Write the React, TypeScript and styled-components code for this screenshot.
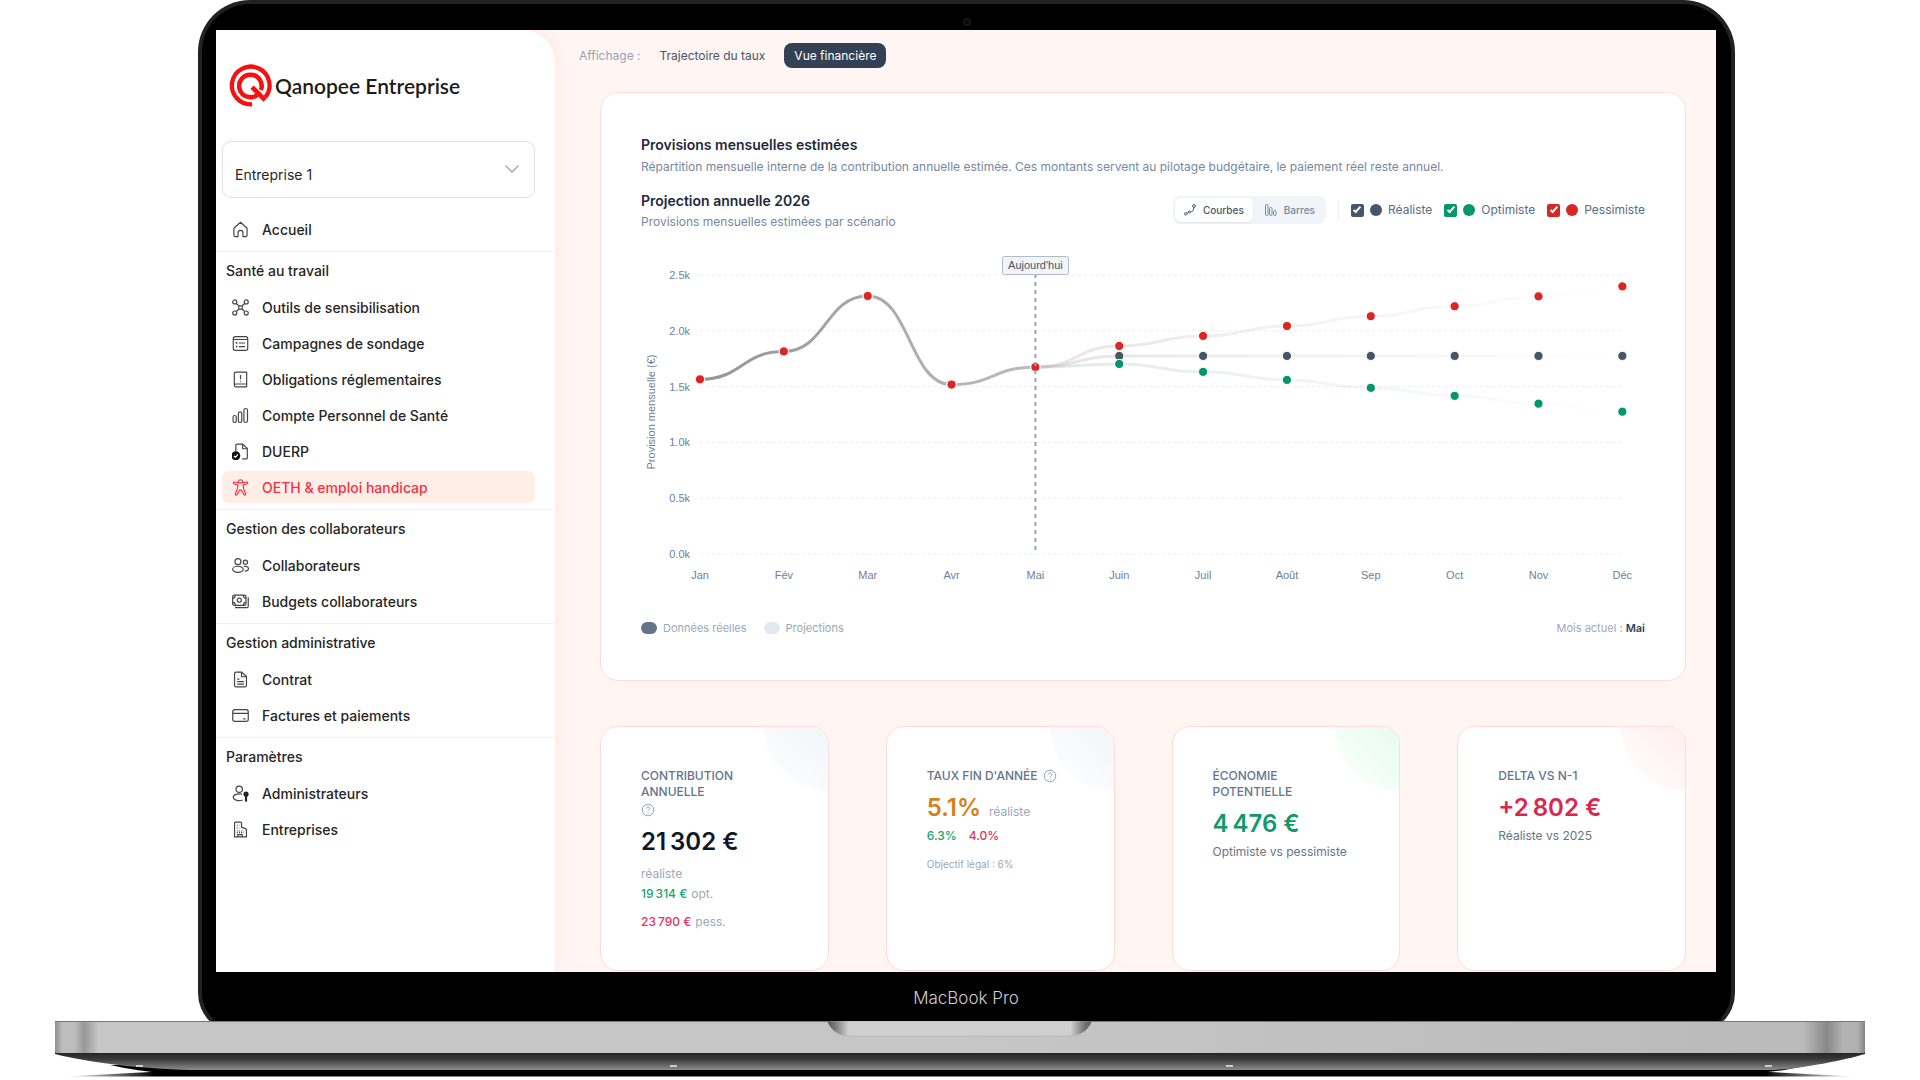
import React from "react";
import styled, { createGlobalStyle, css } from "styled-components";

const GlobalStyle = createGlobalStyle`
  *, *::before, *::after { box-sizing: border-box; }
  body { margin: 0; background: #fff; font-family: Inter, "Liberation Sans", sans-serif; color: #262626; }
  h1, h2, h3, p, ul { margin: 0; padding: 0; }
  ul { list-style: none; }
  button, select, input { font-family: inherit; }
`;

/* ---------- Laptop ---------- */

const Laptop = styled.div`
  overflow: hidden;
`;

const Lid = styled.div`
  position: relative;
  margin: 0 185px -12px 198px;
  padding: 26px 15px 12px 14px;
  background: #000;
  border: 4px solid #222;
  border-bottom-color: #111;
  border-radius: 52px 52px 40px 40px;
`;

const Camera = styled.i`
  position: absolute;
  top: 14px;
  left: 50%;
  width: 8px;
  height: 8px;
  margin-left: -4px;
  border-radius: 50%;
  border: 2px solid #15151c;
  background: #05050a;
`;

const Screen = styled.div`
  display: flex;
  align-items: stretch;
  background: #fff5f2;
  overflow: hidden;
`;

const Chin = styled.div`
  padding: 14px 0 7px;
  text-align: center;
  color: #cfcfcf;
  font-size: 17px;
  font-weight: 300;
  line-height: 24px;
`;

const BaseDrawing = styled.svg`
  position: relative;
  display: block;
  width: 100%;
  height: auto;
`;

/* ---------- Sidebar ---------- */

const Sidebar = styled.aside`
  flex: 0 0 339px;
  background: #fff;
  border-top-right-radius: 32px;
  box-shadow: 0 0 12px 3px #ffe9e6;
`;

const Brand = styled.div`
  display: flex;
  align-items: center;
  gap: 3px;
  padding: 34px 13px;
  color: #1c1c1c;
  font: 600 21px/42px Lato, "Open Sans", sans-serif;
`;

const CompanyField = styled.label`
  position: relative;
  display: block;
  margin: 0 20px 15px 6px;
  color: #a3a3b0;

  svg {
    position: absolute;
    right: 16px;
    top: 21px;
    pointer-events: none;
  }
`;

const CompanySelect = styled.select`
  appearance: none;
  width: 100%;
  height: 57px;
  padding: 9px 12px 0;
  border: 1px solid #e2e2e4;
  border-radius: 9px;
  background: #fff;
  color: #262626;
  font-size: 14px;
`;

const NavSection = styled.section`
  padding-bottom: 6px;
  border-bottom: 1px solid #ffecea;

  &:last-child { border-bottom: 0; }
`;

const SectionTitle = styled.h2`
  padding: 8px 10px 10px;
  font-size: 14px;
  line-height: 21px;
  font-weight: 500;
`;

const NavList = styled.ul`
  display: grid;
  gap: 4px;
  margin: 0 20px 0 6px;
`;

const NavLink = styled.a<{ $active?: boolean }>`
  display: flex;
  align-items: center;
  gap: 13px;
  height: 32px;
  padding: 0 10px;
  border-radius: 7px;
  color: inherit;
  font-size: 14px;
  font-weight: 500;
  text-decoration: none;

  svg { flex: none; color: #444; }

  ${(p) =>
    p.$active &&
    css`
      background: #ffeee8;
      color: #f6323e;
      svg { color: #f6323e; }
    `}
`;

/* ---------- Main ---------- */

const Main = styled.main`
  flex: 1;
  min-width: 0;
  padding: 13px 30px 1px 45px;
`;

const ViewBar = styled.div`
  display: flex;
  align-items: center;
  gap: 9px;
  margin: 0 0 24px -21px;
  color: #94a3b8;
  font-size: 12px;
`;

const ViewButton = styled.button<{ $active?: boolean }>`
  height: 25px;
  padding: 0 10px;
  border: 0;
  border-radius: 8px;
  background: ${(p) => (p.$active ? "#334155" : "transparent")};
  color: ${(p) => (p.$active ? "#fff" : "#475569")};
  font-size: 12px;
`;

const cardFrame = css`
  border: 1px solid #ffdcdb;
  border-radius: 18px;
  background: #fff;
`;

const ChartCard = styled.section`
  ${cardFrame}
  padding: 41px 40px 44px;
`;

const CardTitle = styled.h2`
  color: #1e293b;
  font-size: 14px;
  line-height: 22px;
  font-weight: 600;
`;

const Muted = styled.p`
  color: #7688a3;
  font-size: 12px;
  line-height: 20px;
`;

const CardIntro = styled.header`
  display: grid;
  gap: 1px;
`;

const ChartHead = styled.div`
  display: flex;
  align-items: center;
  justify-content: space-between;
  margin-top: 13px;
`;

const Controls = styled.div`
  display: flex;
  align-items: center;
  gap: 12px;
  padding-bottom: 2px;
`;

const Toggle = styled.div`
  display: flex;
  gap: 3px;
  padding: 2px;
  border-radius: 8px;
  background: #f1f5f9;
`;

const ToggleButton = styled.button<{ $active?: boolean }>`
  display: flex;
  align-items: center;
  gap: 7px;
  height: 24px;
  padding: 0 9px;
  border: 0;
  border-radius: 6px;
  background: ${(p) => (p.$active ? "#fff" : "transparent")};
  box-shadow: ${(p) => (p.$active ? "0 1px 2px #dde3ea" : "none")};
  color: ${(p) => (p.$active ? "#475569" : "#7688a3")};
  font-size: 10px;
  font-weight: 500;
`;

const Scenarios = styled.div`
  display: flex;
  gap: 12px;
  padding-left: 12px;
  border-left: 1px solid #e8edf3;
`;

const Scenario = styled.label<{ $color: string }>`
  display: flex;
  align-items: center;
  gap: 6px;
  color: #5b6b82;
  font-size: 12px;
  line-height: 18px;

  input {
    appearance: none;
    display: grid;
    place-items: center;
    width: 13px;
    height: 13px;
    margin: 0;
    border-radius: 2px;
    background: ${(p) => p.$color};
  }

  input:checked::before {
    content: "";
    width: 4px;
    height: 8px;
    margin-bottom: 2px;
    border: solid #fff;
    border-width: 0 2px 2px 0;
    transform: rotate(42deg);
  }

  i {
    width: 12px;
    height: 12px;
    border-radius: 50%;
    background: ${(p) => p.$color};
  }
`;

const Plot = styled.svg`
  display: block;
  width: 100%;
  height: auto;
  margin-top: 12px;

  text { font: 11px "Liberation Sans", Arial, sans-serif; fill: #6f809a; }
  .today { fill: #475569; }
`;

const PlotFoot = styled.div`
  display: flex;
  justify-content: space-between;
  color: #9aa8bb;
  font-size: 11px;
  line-height: 16px;

  strong { color: #334155; font-weight: 600; }
`;

const Keys = styled.div`
  display: flex;
  gap: 17px;
`;

const Key = styled.span<{ $color: string }>`
  display: flex;
  align-items: center;
  gap: 6px;

  &::before {
    content: "";
    width: 16px;
    height: 12px;
    border-radius: 6px;
    background: ${(p) => p.$color};
  }
`;

const KpiGrid = styled.div`
  display: grid;
  grid-template-columns: repeat(4, 1fr);
  gap: 57px;
  margin-top: 45px;
`;

const KpiCard = styled.article<{ $tint: string }>`
  ${cardFrame}
  position: relative;
  overflow: hidden;
  padding: 41px 40px 40px;
  font-size: 12px;
  line-height: 16px;

  &::before {
    content: "";
    position: absolute;
    top: -64px;
    right: -64px;
    width: 128px;
    height: 128px;
    border-radius: 50%;
    background: linear-gradient(45deg, #fff 0, ${(p) => p.$tint} 50%);
  }
`;

const KpiLabel = styled.h3`
  position: relative;
  display: flex;
  flex-wrap: wrap;
  align-items: center;
  gap: 2px 5px;
  color: #64748b;
  font-size: 12px;
  font-weight: 500;
  text-transform: uppercase;

  svg { color: #94a3b8; }
`;

const KpiRow = styled.div<{ $stacked?: boolean }>`
  display: flex;
  flex-direction: ${(p) => (p.$stacked ? "column" : "row")};
  align-items: ${(p) => (p.$stacked ? "flex-start" : "baseline")};
  gap: 8px;
  margin-top: 8px;
`;

const KpiValue = styled.strong<{ $color: string }>`
  color: ${(p) => p.$color};
  font-size: 24px;
  line-height: 32px;
  font-weight: 600;
`;

const KpiLine = styled.p<{ $gap?: number }>`
  display: flex;
  gap: ${(p) => p.$gap ?? 4}px;
  margin-top: 4px;
  color: #64748b;

  & + & { margin-top: 12px; }
`;

const Soft = styled.span<{ $size?: number }>`
  color: #9aa8bb;
  font-size: ${(p) => p.$size ?? 12}px;
`;

const Amount = styled.span<{ $color: string }>`
  color: ${(p) => p.$color};
  font-weight: 500;
`;

/* ---------- Icons ---------- */

const ICONS: Record<string, React.ReactNode> = {
  home: <path d="M1.8 6.8 8 1.2l6.2 5.6v6.4c0 .9-.6 1.5-1.5 1.5h-2.4v-3.5a2.3 2.3 0 0 0-4.6 0v3.5H3.3c-.9 0-1.5-.6-1.5-1.5z" />,
  network: (
    <>
      <circle cx="2.6" cy="2.8" r="1.9" /><circle cx="13.4" cy="2.8" r="1.9" />
      <circle cx="2.6" cy="13.2" r="1.9" /><circle cx="13.4" cy="13.2" r="1.9" />
      <rect x="6.4" y="6.4" width="3.2" height="3.2" />
      <path d="m4 4.2 2.4 2.2M12 4.2 9.6 6.4M4 11.8l2.4-2.2M12 11.8 9.6 9.6" />
    </>
  ),
  survey: (
    <>
      <rect x="1.2" y="1.5" width="13.6" height="13" rx="2" />
      <path d="M1.2 4.2h13.6M6.4 7.5h5.8M6.4 11h5.8" />
      <path d="M3.6 7.5h1.4M3.6 11h1.4" strokeWidth="1.6" />
    </>
  ),
  rules: (
    <>
      <path d="M2.2 13.4V2.2C2.2 1.5 2.7 1 3.4 1h10.4v11.2H3.6a1.3 1.3 0 0 0 0 2.7h10.2v-2.7" />
      <path d="M8 3.8v4M8 9.2v1" />
    </>
  ),
  bars: (
    <>
      <rect x="1" y="8" width="3" height="6.6" rx="1.5" />
      <rect x="6" y="4.6" width="3.2" height="10" rx="1.6" />
      <rect x="11.2" y="1.4" width="3.4" height="13.2" rx="1.7" />
    </>
  ),
  duerp: (
    <>
      <path d="M3.6 8V2.2c0-.7.5-1.2 1.2-1.2h5.4l4.2 4.2v8.6c0 .7-.5 1.2-1.2 1.2H9.6M10 1v4.4h4.4" />
      <circle cx="3.6" cy="12" r="4.2" fill="#111" stroke="none" />
      <path d="m1.8 12.2 1.4 1.3 2.4-2.7" stroke="#fff" />
    </>
  ),
  person: (
    <path d="M6.2 3.6a2 2 0 1 1 3.6 0l4-.8c1-.2 1.3 1.3.3 1.6l-3.6 1.4.3 2.8 2 5.300c.4 1.100-1.100 1.700-1.600.7L8.800 10.400H7.200l-2.400 4.200c-.5 1-2 .4-1.600-.7l2-5.300.3-2.800-3.600-1.400c-1-.3-.7-1.800.3-1.600zh3.600" />
  ),
  people: (
    <>
      <circle cx="5.6" cy="4.4" r="2.8" /><circle cx="12.6" cy="5" r="2" />
      <ellipse cx="5.6" cy="11.6" rx="5" ry="2.9" />
      <path d="M11.2 8.9c2.4-.5 4.3.4 4.3 2s-1.5 2.5-3.6 2.3" />
    </>
  ),
  money: (
    <>
      <rect x=".6" y="2" width="12.6" height="9.6" rx="1.6" />
      <path d="M15.3 4v8.4c0 .8-.6 1.4-1.4 1.4H2.8M.8 5c1.4 0 2.3-1 2.3-2.8M.8 8.8c1.4 0 2.3 1 2.3 2.6M13 5c-1.4 0-2.3-1-2.3-2.8M13 8.8c-1.4 0-2.3 1-2.3 2.6" />
      <circle cx="6.9" cy="6.8" r="1.9" />
    </>
  ),
  contract: (
    <path d="M2.4 2.4c0-.8.6-1.4 1.4-1.4h5.4l4.4 4.2v8.4c0 .8-.6 1.4-1.4 1.4H3.8c-.8 0-1.4-.6-1.4-1.4zM9 1v4.4h4.600M5 7.600h2M5 10h6.200M5 12.400h6.200" />
  ),
  card: (
    <>
      <rect x=".7" y="2.4" width="14.6" height="11.2" rx="2" />
      <path d="M.7 6h14.6M10.6 11.2h2.2" />
    </>
  ),
  admin: (
    <>
      <circle cx="6.8" cy="4" r="3" />
      <path d="M9.6 8.7C5.4 7.8 1.2 9 1.2 11.6c0 3.2 5.8 3.6 8.8 2.5" />
      <circle cx="13.2" cy="8.6" r="2.4" fill="#222" stroke="none" />
      <path d="M13.2 9v6.6" stroke="#222" strokeWidth="2" />
    </>
  ),
  building: (
    <>
      <path d="M2.4 15V2.2c0-.7.5-1.2 1.2-1.2h4.2c.7 0 1.2.5 1.2 1.2V6l3.6 1.2c.6.2 1 .6 1 1.2V15zM5.400 15v-2.200h4.200V15" />
      <path d="M4.6 4h2.4M4.6 6.6h2.4M4.6 9.4h6.4M4.6 11h6.4" strokeDasharray="1 1" />
    </>
  ),
};

const Icon = ({ name }: { name: string }) => (
  <svg width="17" height="17" viewBox="0 0 16 16" fill="none" stroke="currentColor" strokeWidth="1.1" strokeLinejoin="round" aria-hidden="true">
    {ICONS[name]}
  </svg>
);

const HelpIcon = () => (
  <svg width="14" height="16" viewBox="0 0 14 16" fill="none" stroke="currentColor" role="img" aria-label="Aide">
    <circle cx="7" cy="8" r="5.8" />
    <path d="M5.2 6.6c.2-2.2 3.6-2.2 3.6 0C8.8 8 7 8 7 9.4M7 10.6v1" />
  </svg>
);

const Logo = () => (
  <svg width="43" height="43" viewBox="0 0 42 42" fill="none" stroke="#f90f0f" strokeWidth="4.4" aria-hidden="true">
    <path d="M22.5 39.3A18.4 18.4 0 1 1 35.6 32.4" strokeWidth="4.2" />
    <path d="M27.6 30.2A11 11 0 1 1 31.2 25.4" />
    <path d="m22.5 22.5 12.8 12.8" />
  </svg>
);

/* ---------- Chart ---------- */

const MONTHS = ["Jan", "Fév", "Mar", "Avr", "Mai", "Juin", "Juil", "Août", "Sep", "Oct", "Nov", "Déc"];
const PAST = [1565, 1815, 2312, 1518, 1675];
const SERIES = [
  { id: "real", color: "#475569", line: "#a3a3a3", data: [...PAST, 1775, 1775, 1775, 1775, 1775, 1775, 1775] },
  { id: "opt", color: "#059669", line: "#9db5aa", data: [...PAST, 1703, 1632, 1560, 1489, 1417, 1347, 1275] },
  { id: "pess", color: "#dc2626", line: "#bfa0a0", data: [...PAST, 1864, 1954, 2043, 2131, 2220, 2309, 2398] },
];
const px = (i: number) => 59 + i * 83.85;
const py = (v: number) => 310 - v * 0.1116;

const curve = (data: number[], from: number, to: number) => {
  let d = `M${px(from)} ${py(data[from])}`;
  for (let i = from + 1; i <= to; i++) {
    const mid = (px(i - 1) + px(i)) / 2;
    d += `C${mid} ${py(data[i - 1])} ${mid} ${py(data[i])} ${px(i)} ${py(data[i])}`;
  }
  return d;
};

const ProjectionChart = () => (
  <Plot viewBox="0 0 1004 376" role="img" aria-label="Projection annuelle 2026">
    <defs>
      <linearGradient id="past" gradientUnits="userSpaceOnUse" x1="59" x2="395" y1="0" y2="0">
        <stop offset="0" stopColor="#959595" />
        <stop offset="1" stopColor="#bcbcbc" />
      </linearGradient>
      {SERIES.map((s) => (
        <linearGradient key={s.id} id={s.id} gradientUnits="userSpaceOnUse" x1="395" x2="981" y1="0" y2="0">
          <stop offset="0" stopColor={s.line} stopOpacity=".3" />
          <stop offset=".4" stopColor={s.line} stopOpacity=".16" />
          <stop offset=".9" stopColor={s.line} stopOpacity=".03" />
          <stop offset="1" stopColor={s.line} stopOpacity="0" />
        </linearGradient>
      ))}
    </defs>
    {[0, 500, 1000, 1500, 2000, 2500].map((v) => (
      <g key={v}>
        <line x1="59" x2="982" y1={py(v)} y2={py(v)} stroke="#e8edf0" strokeDasharray="3 3" />
        <text x="49" y={py(v) + 4} textAnchor="end">{(v / 1000).toFixed(1)}k</text>
      </g>
    ))}
    {MONTHS.map((m, i) => (
      <text key={m} x={px(i)} y="335" textAnchor="middle">{m}</text>
    ))}
    <text transform="translate(14 168) rotate(-90)" textAnchor="middle">Provision mensuelle (€)</text>
    <path d={curve(SERIES[0].data, 0, 4)} fill="none" stroke="url(#past)" strokeWidth="3" />
    {SERIES.map((s) => (
      <g key={s.id} fill={s.color} stroke="#fff">
        <path d={curve(s.data, 4, 11)} fill="none" stroke={`url(#${s.id})`} strokeWidth="3" />
        {s.data.map((v, i) => (
          <circle key={i} cx={px(i)} cy={py(v)} r="4.6" />
        ))}
      </g>
    ))}
    <line x1={px(4)} x2={px(4)} y1="30" y2="310" stroke="#94a3b8" strokeWidth="2" strokeDasharray="4 4" />
    <rect x="361.5" y="12.5" width="66" height="18" rx="2" fill="#f1f5f9" stroke="#b4bac3" />
    <text className="today" x={px(4)} y="25" textAnchor="middle">Aujourd'hui</text>
  </Plot>
);

/* ---------- Navigation data ---------- */

const NAV = [
  { title: "", items: [["home", "Accueil"]] },
  {
    title: "Santé au travail",
    items: [
      ["network", "Outils de sensibilisation"],
      ["survey", "Campagnes de sondage"],
      ["rules", "Obligations réglementaires"],
      ["bars", "Compte Personnel de Santé"],
      ["duerp", "DUERP"],
      ["person", "OETH & emploi handicap"],
    ],
  },
  { title: "Gestion des collaborateurs", items: [["people", "Collaborateurs"], ["money", "Budgets collaborateurs"]] },
  { title: "Gestion administrative", items: [["contract", "Contrat"], ["card", "Factures et paiements"]] },
  { title: "Paramètres", items: [["admin", "Administrateurs"], ["building", "Entreprises"]] },
];

const LaptopBase = () => (
  <BaseDrawing viewBox="0 0 1920 59" aria-hidden="true">
    <defs>
      <linearGradient id="metal">
        <stop offset="0" stopColor="#8f8f8f" />
        <stop offset=".004" stopColor="#bdbdbd" />
        <stop offset=".011" stopColor="#bdbdbd" />
        <stop offset=".016" stopColor="#979797" />
        <stop offset=".024" stopColor="#c6c6c6" />
        <stop offset=".5" stopColor="#c6c6c6" />
        <stop offset=".966" stopColor="#bababa" />
        <stop offset=".979" stopColor="#888" />
        <stop offset=".988" stopColor="#b4b4b4" />
        <stop offset=".996" stopColor="#b0b0b0" />
        <stop offset="1" stopColor="#858585" />
      </linearGradient>
      <linearGradient id="under" x2="0" y2="1">
        <stop offset="0" stopColor="#222" />
        <stop offset=".4" stopColor="#3a3a3a" />
        <stop offset="1" stopColor="#8c8c8c" />
      </linearGradient>
      <linearGradient id="notch">
        <stop offset="0" stopColor="#555" />
        <stop offset=".03" stopColor="#777" />
        <stop offset=".08" stopColor="#cfcfcf" />
        <stop offset=".92" stopColor="#cfcfcf" />
        <stop offset=".97" stopColor="#777" />
        <stop offset="1" stopColor="#555" />
      </linearGradient>
      <linearGradient id="ground">
        <stop offset="0" stopColor="#000" stopOpacity="0" />
        <stop offset=".05" stopColor="#000" />
        <stop offset=".95" stopColor="#000" />
        <stop offset="1" stopColor="#000" stopOpacity="0" />
      </linearGradient>
    </defs>
    <path d="M65 55.5 150 51h1620l85 4.5z" fill="url(#ground)" />
    <path d="M110 44c40 9 70 10 110 10h1480c40 0 70-1 110-10z" fill="#000" />
    <path d="M55 31h1810v2c-20 6-60 14-90 16H200C150 49 90 42 55 33z" fill="url(#under)" />
    <rect x="55" width="1810" height="32" rx="1" fill="url(#metal)" />
    <path d="M55 .5h1810" stroke="#777" />
    <path d="M827 0c4 10 12 15 24 15h217c12 0 20-5 24-15z" fill="url(#notch)" stroke="#aaa" strokeWidth=".5" />
    <path d="M136 45h7M670 45h7M1226 45h7M1765 45h7" stroke="#ccc" strokeWidth="2" />
  </BaseDrawing>
);

export default function App() {
  return (
    <Laptop>
      <GlobalStyle />
      <Lid>
        <Camera />
        <Screen>
          <Sidebar>
            <Brand><Logo />Qanopee Entreprise</Brand>
            <CompanyField>
              <CompanySelect aria-label="Entreprise" defaultValue="1">
                <option value="1">Entreprise 1</option>
              </CompanySelect>
              <svg width="14" height="14" viewBox="0 0 14 14" fill="none" stroke="currentColor" aria-hidden="true">
                <path d="m.5 3.5 6.5 6.5 6.5-6.5" strokeWidth="1.3" />
              </svg>
            </CompanyField>
            <nav>
              {NAV.map((section) => (
                <NavSection key={section.title}>
                  {section.title && <SectionTitle>{section.title}</SectionTitle>}
                  <NavList>
                    {section.items.map(([icon, label]) => (
                      <li key={label}>
                        <NavLink href="#" $active={icon === "person"}><Icon name={icon} />{label}</NavLink>
                      </li>
                    ))}
                  </NavList>
                </NavSection>
              ))}
            </nav>
          </Sidebar>
          <Main>
            <ViewBar>
              <span>Affichage :</span>
              <ViewButton>Trajectoire du taux</ViewButton>
              <ViewButton $active>Vue financière</ViewButton>
            </ViewBar>
            <ChartCard>
              <CardIntro>
                <CardTitle>Provisions mensuelles estimées</CardTitle>
                <Muted>Répartition mensuelle interne de la contribution annuelle estimée. Ces montants servent au pilotage budgétaire, le paiement réel reste annuel.</Muted>
              </CardIntro>
              <ChartHead>
                <div>
                  <CardTitle>Projection annuelle 2026</CardTitle>
                  <Muted>Provisions mensuelles estimées par scénario</Muted>
                </div>
                <Controls>
                  <Toggle>
                    <ToggleButton $active>
                      <svg width="12" height="12" viewBox="0 0 12 12" fill="none" stroke="currentColor" aria-hidden="true">
                        <circle cx="1.8" cy="9.8" r="1.3" /><circle cx="5.4" cy="8" r="1" /><circle cx="10" cy="2" r="1.4" />
                        <path d="m3 9.4 1.5-.8M6.4 7.8c2-.2 2.6-.6 2.8-1.6L10 3.4" />
                      </svg>
                      Courbes
                    </ToggleButton>
                    <ToggleButton>
                      <svg width="12" height="12" viewBox="0 0 12 12" fill="none" stroke="currentColor" aria-hidden="true">
                        <rect x=".5" y=".5" width="2.5" height="11" rx="1" /><rect x="4.5" y="3.5" width="2.5" height="8" rx="1" /><rect x="8.5" y="6.5" width="2.5" height="5" rx="1" />
                      </svg>
                      Barres
                    </ToggleButton>
                  </Toggle>
                  <Scenarios>
                    <Scenario $color="#475569"><input type="checkbox" defaultChecked /><i />Réaliste</Scenario>
                    <Scenario $color="#059669"><input type="checkbox" defaultChecked /><i />Optimiste</Scenario>
                    <Scenario $color="#dc2626"><input type="checkbox" defaultChecked /><i />Pessimiste</Scenario>
                  </Scenarios>
                </Controls>
              </ChartHead>
              <ProjectionChart />
              <PlotFoot>
                <Keys>
                  <Key $color="#64748b">Données réelles</Key>
                  <Key $color="#e2e8f0">Projections</Key>
                </Keys>
                <span>Mois actuel : <strong>Mai</strong></span>
              </PlotFoot>
            </ChartCard>
            <KpiGrid>
              <KpiCard $tint="#f1f5f9">
                <KpiLabel>Contribution annuelle <HelpIcon /></KpiLabel>
                <KpiRow $stacked>
                  <KpiValue $color="#0f172a">21&#8239;302&nbsp;€</KpiValue>
                  <Soft>réaliste</Soft>
                </KpiRow>
                <KpiLine><Amount $color="#17a56f">19&#8239;314&nbsp;€</Amount><Soft>opt.</Soft></KpiLine>
                <KpiLine><Amount $color="#e0355c">23&#8239;790&nbsp;€</Amount><Soft>pess.</Soft></KpiLine>
              </KpiCard>
              <KpiCard $tint="#f1f5f9">
                <KpiLabel>Taux fin d'année <HelpIcon /></KpiLabel>
                <KpiRow>
                  <KpiValue $color="#d97f14">5.1%</KpiValue>
                  <Soft>réaliste</Soft>
                </KpiRow>
                <KpiLine $gap={12}><Amount $color="#17a56f">6.3%</Amount><Amount $color="#e0355c">4.0%</Amount></KpiLine>
                <KpiLine><Soft $size={10}>Objectif légal : 6%</Soft></KpiLine>
              </KpiCard>
              <KpiCard $tint="#e6fcf0">
                <KpiLabel>Économie potentielle</KpiLabel>
                <KpiRow><KpiValue $color="#0e9a6c">4&#8239;476&nbsp;€</KpiValue></KpiRow>
                <KpiLine>Optimiste vs pessimiste</KpiLine>
              </KpiCard>
              <KpiCard $tint="#ffeef0">
                <KpiLabel>Delta vs N-1</KpiLabel>
                <KpiRow><KpiValue $color="#dc2450">+2&#8239;802&nbsp;€</KpiValue></KpiRow>
                <KpiLine>Réaliste vs 2025</KpiLine>
              </KpiCard>
            </KpiGrid>
          </Main>
        </Screen>
        <Chin>MacBook Pro</Chin>
      </Lid>
      <LaptopBase />
    </Laptop>
  );
}
